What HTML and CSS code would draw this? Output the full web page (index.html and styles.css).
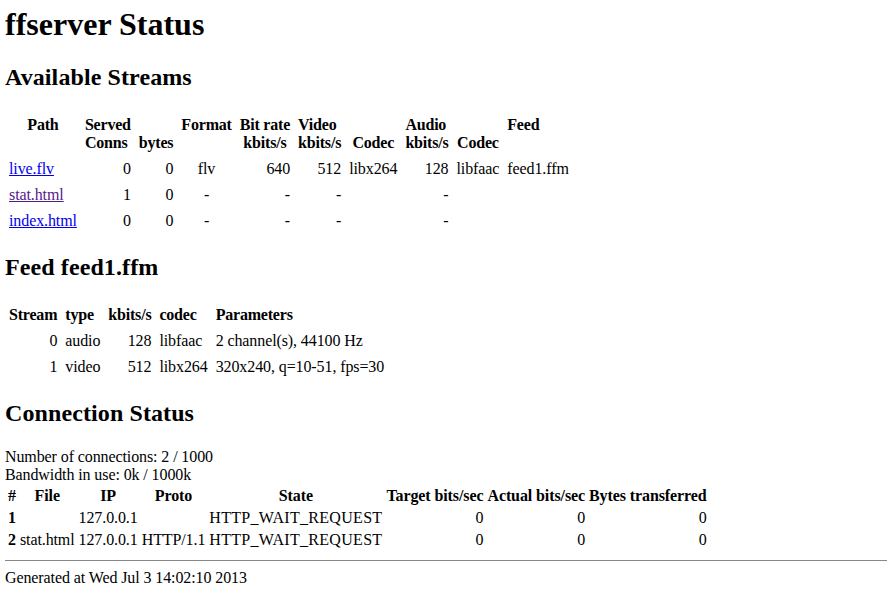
FILE: index.html
```html
<!DOCTYPE html>
<html>
<head>
<meta charset="utf-8">
<title>ffserver Status</title>
<link rel="stylesheet" href="styles.css">
</head>
<body>
<h1>ffserver Status</h1>
<h2>Available Streams</h2>
<table class="t4">
<tr><th class="top">Path</th><th class="l">Served<br>Conns</th><th><br>bytes</th><th class="top">Format</th><th>Bit rate<br>kbits/s</th><th class="l">Video<br>kbits/s</th><th><br>Codec</th><th class="l">Audio<br>kbits/s</th><th><br>Codec</th><th class="l top">Feed</th></tr>
<tr><td><a href="#live" class="link">live.flv</a></td><td class="r">0</td><td class="r">0</td><td class="c">flv</td><td class="r">640</td><td class="r">512</td><td>libx264</td><td class="r">128</td><td>libfaac</td><td>feed1.ffm</td></tr>
<tr><td><a href="#stat" class="link visited">stat.html</a></td><td class="r">1</td><td class="r">0</td><td class="c">-</td><td class="r">-</td><td class="r">-</td><td></td><td class="r">-</td><td></td><td></td></tr>
<tr><td><a href="#index" class="link">index.html</a></td><td class="r">0</td><td class="r">0</td><td class="c">-</td><td class="r">-</td><td class="r">-</td><td></td><td class="r">-</td><td></td><td></td></tr>
</table>
<h2>Feed feed1.ffm</h2>
<table class="t4">
<tr><th class="l">Stream</th><th class="l">type</th><th class="l">kbits/s</th><th class="l">codec</th><th class="l">Parameters</th></tr>
<tr><td class="r">0</td><td>audio</td><td class="r">128</td><td>libfaac</td><td>2 channel(s), 44100 Hz</td></tr>
<tr><td class="r">1</td><td>video</td><td class="r">512</td><td>libx264</td><td>320x240, q=10-51, fps=30</td></tr>
</table>
<h2>Connection Status</h2>
Number of connections: 2 / 1000<br>
Bandwidth in use: 0k / 1000k<br>
<table class="tc">
<tr><th>#</th><th>File</th><th>IP</th><th>Proto</th><th>State</th><th>Target bits/sec</th><th>Actual bits/sec</th><th>Bytes transferred</th></tr>
<tr><td><b>1</b></td><td></td><td>127.0.0.1</td><td></td><td class="st">HTTP_WAIT_REQUEST</td><td class="r">0</td><td class="r">0</td><td class="r">0</td></tr>
<tr><td><b>2</b></td><td>stat.html</td><td>127.0.0.1</td><td>HTTP/1.1</td><td class="st">HTTP_WAIT_REQUEST</td><td class="r">0</td><td class="r">0</td><td class="r">0</td></tr>
</table>
<hr class="rule">Generated at Wed Jul 3 14:02:10 2013
</body>
</html>
```
FILE: styles.css
```css
html, body {
  font-family: "Liberation Serif", "Times New Roman", serif;
  font-size: 16px;
  color: #000;
  background: #fff;
}
body {
  margin: 6px 0 8px 5px;
  letter-spacing: -0.1px;
}
h1 {
  font-size: 32px;
  margin: 0 0 21px;
  letter-spacing: 0;
}
h2 {
  font-size: 24px;
  margin: 20px 0 21px;
  letter-spacing: 0.1px;
}
table {
  border-collapse: separate;
}
.t4 {
  border-spacing: 0;
}
.t4 th, .t4 td {
  padding: 4px;
}
.tc {
  border-spacing: 2px;
}
.tc th, .tc td {
  padding: 1px;
}
th {
  font-weight: bold;
  text-align: center;
  vertical-align: middle;
  letter-spacing: -0.2px;
}
.tc th {
  letter-spacing: -0.1px;
}
.tc .st {
  letter-spacing: 0.3px;
}
td {
  vertical-align: middle;
}
.top { vertical-align: top; }
.l { text-align: left; }
.r { text-align: right; }
.c { text-align: center; }
.link { color: #0000ee; text-decoration: underline; }
.link.visited { color: #551a8b; }
.rule {
  border: none;
  border-top: 1px solid #888;
  height: 0;
  margin: 8px 0;
}
```
